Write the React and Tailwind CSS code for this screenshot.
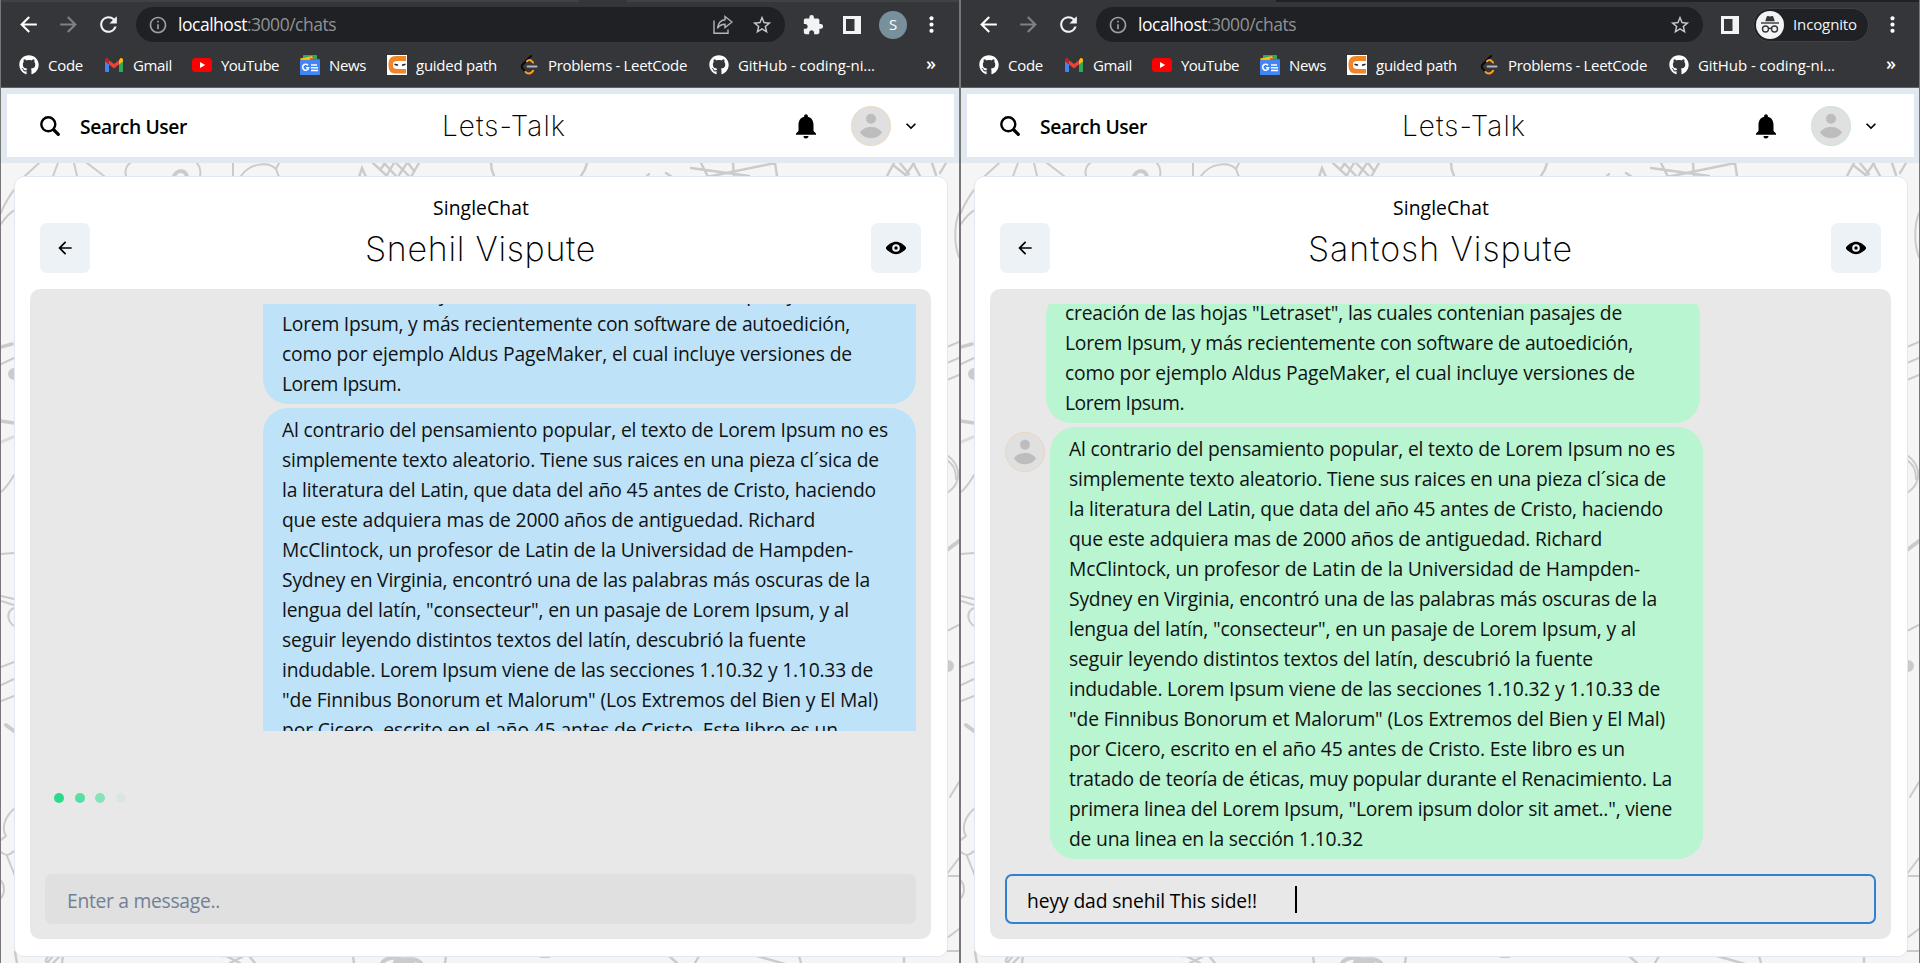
import React, { useLayoutEffect, useRef, useState } from "react";
import {
  MdArrowBack,
  MdArrowForward,
  MdRefresh,
  MdInfoOutline,
  MdStarBorder,
  MdExtension,
  MdMoreVert,
  MdNotifications,
  MdExpandMore,
} from "react-icons/md";
import { FaGithub } from "react-icons/fa";

/* One line of text whose tracking is adjusted so that it spans `w` pixels. */
function Fit({ w, className = "", children }) {
  const ref = useRef(null);
  const [spacing, setSpacing] = useState(0);
  useLayoutEffect(() => {
    const natural = ref.current.getBoundingClientRect().width;
    setSpacing((w - natural) / String(children).length);
  }, [w, children]);
  return (
    <span
      ref={ref}
      className={"inline-block whitespace-pre " + className}
      style={{ letterSpacing: spacing + "px" }}
    >
      {children}
    </span>
  );
}

function SearchIcon() {
  return (
    <svg viewBox="0 0 20 20" className="size-5" fill="none" stroke="#000" strokeLinecap="round">
      <circle cx="8.300" cy="8.300" r="7" strokeWidth="2.400" />
      <path d="M14 14l4.300 4.300" strokeWidth="3.200" />
    </svg>
  );
}

function GmailIcon() {
  return (
    <svg viewBox="0 0 20 20" className="size-5">
      <path d="M1 5v11.200c0 .5.4.8.8.8H5V8.500z" fill="#4285f4" />
      <path d="M19 5v11.200c0 .5-.4.8-.8.8H15V8.500z" fill="#34a853" />
      <path d="M15 5.200V9.600l4-3V5c0-1.700-1.600-2.500-2.900-1.500z" fill="#fbbc04" />
      <path d="M5 9.600V5.200l5 3.700 5-3.700v4.400l-5 3.800z" fill="#ea4335" />
      <path d="M1 5v1.600l4 3V5.200L3.900 3.500C2.600 2.500 1 3.300 1 5z" fill="#c5221f" />
    </svg>
  );
}

function YouTubeIcon() {
  return (
    <svg viewBox="0 0 20 20" className="size-5">
      <rect x="0" y="3" width="20" height="14" rx="3.500" fill="#f00" />
      <path d="M8 7v6l5.200-3z" fill="#fff" />
    </svg>
  );
}

function NewsIcon() {
  return (
    <svg viewBox="0 0 20 20" className="size-5">
      <rect x="3" y="0" width="14" height="6" rx=".6" fill="#34a853" />
      <path d="M0 3.500 12 1l1.500 5H1z" fill="#fbbc04" />
      <path d="M10 3.200 20 4.200V8H10z" fill="#ea4335" />
      <rect x="0" y="5" width="20" height="15" rx="1" fill="#4285f4" />
      <path d="M8 10.300A3 3 0 1 0 8.600 12.800H6" fill="none" stroke="#fff" strokeWidth="1.600" />
      <path d="M11 10h6M11 12.700h7M11 15.400h7" stroke="#fff" strokeWidth="1.500" />
    </svg>
  );
}

function NinjaIcon() {
  return (
    <svg viewBox="0 0 20 20" className="size-5">
      <rect width="20" height="20" fill="#fff" />
      <path
        d="M19 1H9.500C3.500 1 1.500 4 1.500 10s2 8.500 8 8.500H19V14H10.500C7.500 14 6 13 6 10s1.500-4 4.500-4H19z"
        fill="#f0862a"
      />
      <path d="M6.500 7.500H20v4.700H6.500z" fill="#fff" />
      <path d="M7.500 9.300l3.500 1M18.500 9.300l-3.500 1" stroke="#222" strokeWidth="1.500" />
    </svg>
  );
}

function LeetCodeIcon() {
  return (
    <svg viewBox="0 0 20 20" className="size-5" fill="none" strokeWidth="2" strokeLinecap="round">
      <path d="M12 1 3.600 9.500c-1.300 1.500-1.200 2.800 0 4.200l2.900 3" stroke="#0a0a0a" />
      <path d="M8 6.200c1.500-1.500 3-1.600 4.500-.2l1.600 1.600" stroke="#ffa116" />
      <path d="M6.500 16.800c1.900 2.200 4.300 2.200 6.200.4l1.400-1.500" stroke="#ffa116" />
      <path d="M8.500 11.500H17.500" stroke="#b3b3b3" />
    </svg>
  );
}

function ShareIcon() {
  return (
    <svg viewBox="0 0 20 20" className="size-5" fill="none" stroke="#b4b5b8" strokeWidth="1.400">
      <path d="M1 5.500V18.200H15V14.500" />
      <path d="M12 1.500 19 7l-7 5.500V9.300C8.500 9.300 6.300 10.500 4.500 13.300 5 9 7.500 5.200 12 4.700z" />
    </svg>
  );
}

function SidePanelIcon() {
  return (
    <svg viewBox="0 0 18 18" className="size-[18px]">
      <path d="M0 0h18v18H0zM3 3v12h8.500V3z" fill="#f1f3f4" fillRule="evenodd" />
    </svg>
  );
}

function IncognitoIcon() {
  return (
    <svg viewBox="0 0 28 28" className="size-7">
      <circle cx="14" cy="14" r="14" fill="#f1f3f4" />
      <path d="M9.200 10.200 10.600 5.900c.2-.7.8-1 1.400-.8l2 .5 2-.5c.6-.2 1.200.1 1.400.8l1.400 4.300z" fill="#35363a" />
      <path d="M5 11.300h18v1.400H5z" fill="#35363a" />
      <g fill="none" stroke="#35363a" strokeWidth="1.400">
        <circle cx="9.500" cy="18" r="3" />
        <circle cx="18.500" cy="18" r="3" />
        <path d="M12.500 17.700c1-.7 2-.7 3 0" />
      </g>
    </svg>
  );
}

function Avatar({ ring }) {
  return (
    <svg viewBox="0 0 40 40" className="size-10 shrink-0">
      <circle cx="20" cy="20" r="19.700" fill="#e0e0e0" stroke={ring} strokeWidth=".6" />
      <circle cx="20" cy="12.700" r="5" fill="#bdbdbd" />
      <path d="M9 26.500C11 22.800 15 20.900 20 20.900s9 1.900 11 5.600C28.800 30 24.800 32.200 20 32.200S11.200 30 9 26.500z" fill="#bdbdbd" />
    </svg>
  );
}

function EyeIcon() {
  return (
    <svg viewBox="0 0 24 24" className="size-5">
      <path d="M23.432,10.524C20.787,7.614,16.4,4.538,12,4.6,7.6,4.537,3.213,7.615.568,10.524a2.211,2.211,0,0,0,0,2.948C3.182,16.351,7.507,19.4,11.839,19.4h.308c4.347,0,8.671-3.049,11.288-5.929A2.21,2.21,0,0,0,23.432,10.524ZM7.4,12A4.6,4.6,0,1,1,12,16.6,4.6,4.6,0,0,1,7.4,12Z" />
      <circle cx="12" cy="12" r="2" />
    </svg>
  );
}

/* Hand-drawn wallpaper that shows around the chat card. */
function Doodles() {
  return (
    <svg
      viewBox="0 0 958 800"
      className="absolute inset-0 h-[800px] w-[958px]"
      fill="none"
      stroke="#cbcbcb"
      strokeWidth="2"
      strokeLinecap="round"
    >
      <path d="M38 0 24 13C12 27 4 38 0 50M57 0l-5 13M73 0l3 13M86 0l17 13M129 0c-5 4-5 9-4 13M196 0c4 5 4 9 3 13M232 0v13M240 13C250-1 268-1 275 6l3 8M278 0l-3 6M0 61c4-6 8-11 14-14" />
      <path d="M173 13c3-6 10-7 13 0" strokeWidth="4" />
      <path d="M358 14l3-9 4 9M372 0l14 13M383 0l12 13M395 0l13 13M407 0l6 8M418 0l-8 14M406 0l-8 12M393 0l-7 12M384 0l-5 7" strokeWidth="2.400" />
      <path d="M490 0c0 5 1 9 3 13M586 0c-1 5-3 9-6 13M646 13l2-2M665 10l6 4M700 0l7 14M732 0l1 13M690 5l58 8M706 14l68-14M774 0l2 13" strokeWidth="2.400" />
      <path d="M893 0l-7 13M892 2l14 11M899 0l9 11M913 0l-9 13M912 0l7 13M931 0l4 12M945 0l-6 10" strokeWidth="2.400" />
      <path d="M958 50c-5 12-5 32 0 44M946 184l12-5M946 200l12-5M946 217l12-5M946 292c15 11 15 28 0 38M946 297c8 6 9 12 9 19M946 468l12-6M949 634l9-15M946 711l12-16M946 713h12M946 775l12-9M946 788h12" />
      <path d="M946 387l12-9" strokeWidth="4" />
      <circle cx="947" cy="503" r="5" fill="#cbcbcb" />
      <path d="M0 184l11-3M0 258l13 2" strokeWidth="3.500" />
      <circle cx="13" cy="211" r="5" fill="#cbcbcb" />
      <path d="M0 201l13-6M0 329c5-4 9-10 13-17M0 391l13-1M0 433l13 3M0 438l13 4M13 445c-9 4-6 14 0 18M0 504l13-5M0 522l13-6M0 538l13-5" />
      <path d="M0 279l12-5" stroke="#dcdcdc" strokeWidth="3" />
      <path d="M5 562l8 6" strokeWidth="4" />
      <path d="M14 645C4 653 0 665 5 673l-5 4M0 689c4 4 8 4 13-1M6 693l8 20M0 718c4 4 4 12 0 17" />
      <path d="M14 789l2 11M48 793c-3 2-4 5-2 7M62 793l-1 7M47 799l5-6M52 800l7-7M221 793h22l-14 7M225 793l14 7M248 793l6 7M352 793l1 7M445 793l-1 7M668 793l8 7M698 793l-4 7M756 793l28 8M798 793l2 7M903 793v7" strokeWidth="2.400" />
      <path d="M381 800c4-6 14-6 18-4s14-3 21 4M394 799h18" strokeWidth="4" />
      <path d="M540 793h8" strokeWidth="4" />
    </svg>
  );
}

const BOOKMARKS = [
  { icon: <FaGithub className="size-5" />, label: "Code", w: 35 },
  { icon: <GmailIcon />, label: "Gmail", w: 39 },
  { icon: <YouTubeIcon />, label: "YouTube", w: 58 },
  { icon: <NewsIcon />, label: "News", w: 37 },
  { icon: <NinjaIcon />, label: "guided path", w: 81 },
  { icon: <LeetCodeIcon />, label: "Problems - LeetCode", w: 139 },
  { icon: <FaGithub className="size-5" />, label: "GitHub - coding-ni...", w: 137 },
];

function BrowserChrome({ incognito }) {
  return (
    <div className="flex h-[88px] flex-col border-b border-[#5f6064] bg-[#35363a] text-white">
      {incognito ? (
        <div className="flex h-0.5">
          <div className="w-[315px] bg-[#35363a]" />
          <div className="grow bg-[#202124]" />
        </div>
      ) : (
        <div className="flex h-0.5">
          <div className="w-[578px] bg-[#404144]" />
          <div className="w-[48px] bg-[#35363a]" />
          <div className="grow bg-[#404144]" />
        </div>
      )}
      <div className="flex h-[45px] items-center pl-[15px]">
        <MdArrowBack className="size-[25px]" />
        <MdArrowForward className="ml-[15px] size-[25px] text-[#808184]" />
        <MdRefresh className="ml-[15px] size-[25px] text-[#f1f3f4]" />
        <div
          className={
            "ml-[15px] flex h-[35px] items-center rounded-full bg-[#202124] pl-[12px] " +
            (incognito ? "w-[607px]" : "w-[649px]")
          }
        >
          <MdInfoOutline className="size-5 text-[#9aa0a6]" />
          <div className="ml-[10px] flex grow text-[17.500px]">
            <Fit w={69}>localhost</Fit>
            <Fit w={89} className="text-[#8f9195]">:3000/chats</Fit>
          </div>
          {!incognito && <ShareIcon />}
          <MdStarBorder className="ml-[18px] mr-[12px] size-[22px] text-[#c6c8cb]" />
        </div>
        {incognito ? (
          <>
            <div className="ml-[18px]"><SidePanelIcon /></div>
            <div className="ml-[14px] flex h-[34px] w-[116px] items-center rounded-full border border-[#3f4043] bg-[#202124] pl-[2px] text-[15px]">
              <IncognitoIcon />
              <Fit w={64} className="mb-px ml-[9px] text-[#f1f3f4]">Incognito</Fit>
            </div>
            <MdMoreVert className="ml-[11px] size-[25px]" />
          </>
        ) : (
          <>
            <MdExtension className="ml-[17px] size-[22px] text-[#f1f3f4]" />
            <div className="ml-[19px]"><SidePanelIcon /></div>
            <div className="ml-[18px] flex size-7 items-center justify-center rounded-full bg-[#78909c] text-[15px]">
              S
            </div>
            <MdMoreVert className="ml-[12px] size-[25px]" />
          </>
        )}
      </div>
      <div className="grid h-[36px] grid-cols-[85px_88px_108px_87px_132px_190px_217px_20px] items-center pl-[18px]">
        {BOOKMARKS.map((b) => (
          <div key={b.label} className="flex items-center gap-[9px] text-[15px]">
            {b.icon}
            <Fit w={b.w}>{b.label}</Fit>
          </div>
        ))}
        <span className="pb-1 text-[18px] font-semibold leading-none">»</span>
      </div>
    </div>
  );
}

function NavBar({ ring }) {
  return (
    <div className="flex h-[75px] items-center border-x-[6px] border-y-[6px] border-r-[5px] border-[#e2e8f0] bg-white pl-[33px] pr-[33px]">
      <div className="flex flex-1 items-center gap-5">
        <SearchIcon />
        <Fit w={107} className="pt-[3px] text-[19.300px] font-semibold">Search User</Fit>
      </div>
      <Fit w={124} className="ml-[47px] pt-px font-[Inter] text-[28px] font-extralight">Lets-Talk</Fit>
      <div className="flex flex-1 items-center justify-end">
        <MdNotifications className="size-[30px]" />
        <div className="ml-[30px]"><Avatar ring={ring} /></div>
        <MdExpandMore className="ml-[10px] size-5" />
      </div>
    </div>
  );
}

const FIRST = [
  ["creación de las hojas \"Letraset\", las cuales contenian pasajes de", 557],
  ["Lorem Ipsum, y más recientemente con software de autoedición,", 568],
  ["como por ejemplo Aldus PageMaker, el cual incluye versiones de", 570],
  ["Lorem Ipsum.", 119],
];

const SECOND = [
  ["Al contrario del pensamiento popular, el texto de Lorem Ipsum no es", 606],
  ["simplemente texto aleatorio. Tiene sus raices en una pieza cl´sica de", 597],
  ["la literatura del Latin, que data del año 45 antes de Cristo, haciendo", 594],
  ["que este adquiera mas de 2000 años de antiguedad. Richard", 533],
  ["McClintock, un profesor de Latin de la Universidad de Hampden-", 571],
  ["Sydney en Virginia, encontró una de las palabras más oscuras de la", 588],
  ["lengua del latín, \"consecteur\", en un pasaje de Lorem Ipsum, y al", 567],
  ["seguir leyendo distintos textos del latín, descubrió la fuente", 524],
  ["indudable. Lorem Ipsum viene de las secciones 1.10.32 y 1.10.33 de", 591],
  ["\"de Finnibus Bonorum et Malorum\" (Los Extremos del Bien y El Mal)", 596],
  ["por Cicero, escrito en el año 45 antes de Cristo. Este libro es un", 556],
  ["tratado de teoría de éticas, muy popular durante el Renacimiento. La", 603],
  ["primera linea del Lorem Ipsum, \"Lorem ipsum dolor sit amet..\", viene", 603],
  ["de una linea en la sección 1.10.32", 294],
];

function Bubble({ lines, className }) {
  return (
    <div className={"flex shrink-0 flex-col rounded-[25px] pb-[5px] pl-[19px] pt-[7px] text-[19.300px] leading-[30px] text-[#101214] " + className}>
      {lines.map(([text, w]) => (
        <div key={text} className="h-[30px]">
          <Fit w={w}>{text}</Fit>
        </div>
      ))}
    </div>
  );
}

function ChatCard({ name, nameWidth, children }) {
  return (
    <div className="relative ml-[13px] mr-[11px] mt-[13px] flex h-[781px] flex-col rounded-[10px] border border-[#e2e8f0] bg-white pl-[15px] pr-[16px] pt-[15px]">
      <div className="flex h-[31px] items-center justify-center pl-px pt-[2px] text-[19.300px]">
        <Fit w={96}>SingleChat</Fit>
      </div>
      <div className="flex h-[50px] items-center justify-between px-[10px]">
        <div className="flex size-[50px] items-center justify-center rounded-[7px] bg-[#edf2f7]">
          <MdArrowBack className="size-5" />
        </div>
        <Fit w={nameWidth} className="font-[Inter] text-[34px] font-extralight">{name}</Fit>
        <div className="flex size-[50px] items-center justify-center rounded-[7px] bg-[#edf2f7]">
          <EyeIcon />
        </div>
      </div>
      <div className="mt-[16px] flex h-[650px] flex-col justify-between rounded-[10px] bg-[#e8e8e8] p-[15px]">
        {children}
      </div>
    </div>
  );
}

function Window({ incognito, ring, name, nameWidth, children }) {
  return (
    <div className="h-[963px] w-[960px] overflow-hidden border-x border-[#777777]">
      <BrowserChrome incognito={incognito} />
      <NavBar ring={ring} />
      <div className="relative h-[800px] overflow-hidden bg-[#f5f5f5]">
        <Doodles />
        <ChatCard name={name} nameWidth={nameWidth}>{children}</ChatCard>
      </div>
    </div>
  );
}

export default function App() {
  return (
    <div className="flex h-[963px] w-[1920px] overflow-hidden bg-white font-['Open_Sans','Noto_Sans',sans-serif] text-black">
      <Window ring="#f0cfa0" name="Snehil Vispute" nameWidth={231}>
        <div className="flex h-[427px] flex-col items-end gap-1 overflow-hidden">
          <div className="flex h-[100px] shrink-0 flex-col justify-end overflow-hidden">
            <Bubble lines={FIRST} className="w-[653px] bg-[#bee3f8]" />
          </div>
          <Bubble lines={SECOND} className="w-[653px] bg-[#bee3f8]" />
        </div>
        <div className="flex items-center pb-[9px] pl-[9px]">
          <div className="size-2.5 rounded-full bg-[#2cda8c]" />
          <div className="ml-[11px] size-2.5 rounded-full bg-[#57dea1]" />
          <div className="ml-[10px] size-2.5 rounded-full bg-[#8ae2bb]" />
          <div className="ml-[11px] size-2.5 rounded-full bg-[#dae6e0]" />
        </div>
        <div className="flex h-[50px] items-center rounded-[7px] bg-[#e0e0e0] pl-[22px] pt-[5px] text-[19.300px] text-[#718096]">
          <Fit w={153}>Enter a message..</Fit>
        </div>
      </Window>
      <Window incognito ring="#b5e3c4" name="Santosh Vispute" nameWidth={265}>
        <div className="flex h-[555px] flex-col gap-1 overflow-hidden">
          <div className="ml-[41px] flex h-[119px] shrink-0 flex-col justify-end overflow-hidden">
            <Bubble lines={FIRST} className="w-[654px] bg-[#b9f5d0]" />
          </div>
          <div className="flex items-start">
            <div className="mr-[5px] mt-[5px]"><Avatar ring="#f0cfa0" /></div>
            <Bubble lines={SECOND} className="w-[653px] bg-[#b9f5d0]" />
          </div>
        </div>
        <div className="flex h-[50px] items-center rounded-[7px] border-2 border-[#3182ce] pl-[20px] text-[19.300px]">
          <Fit w={230} className="pt-[5px]">heyy dad snehil This side!!</Fit>
          <div className="ml-[38px] h-[27px] w-0.5 bg-black" />
        </div>
      </Window>
    </div>
  );
}
